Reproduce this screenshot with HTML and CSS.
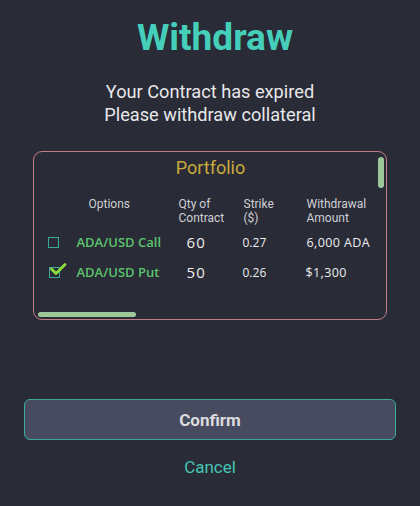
FILE: index.html
```html
<!DOCTYPE html>
<html>
<head>
<meta charset="utf-8">
<link rel="stylesheet" href="styles.css">
</head>
<body>
<main class="dialog">
  <h1 class="title">Withdraw</h1>
  <p class="subtitle">Your Contract has expired<br>Please withdraw collateral</p>
  <section class="card">
    <h2 class="card-title">Portfolio</h2>
    <div class="table">
      <div class="th"></div>
      <div class="th th-options">Options</div>
      <div class="th">Qty of<br>Contract</div>
      <div class="th">Strike<br>($)</div>
      <div class="th">Withdrawal<br>Amount</div>

      <div class="cell"><span class="check"></span></div>
      <div class="cell option">ADA/USD Call</div>
      <div class="cell qty">60</div>
      <div class="cell strike">0.27</div>
      <div class="cell amount">6,000 ADA</div>

      <div class="cell"><span class="check checked"><svg viewBox="0 0 18 14" width="18" height="14"><path d="M2.5 7 L7 11.5 L16 2.5" fill="none" stroke="#8ee03c" stroke-width="2.8" stroke-linecap="round" stroke-linejoin="round"/></svg></span></div>
      <div class="cell option">ADA/USD Put</div>
      <div class="cell qty">50</div>
      <div class="cell strike">0.26</div>
      <div class="cell amount amount2">$1,300</div>
    </div>
    <div class="vscroll"></div>
    <div class="hscroll"></div>
  </section>
  <div class="actions">
    <button class="confirm">Confirm</button>
    <button class="cancel">Cancel</button>
  </div>
</main>
</body>
</html>
```
FILE: styles.css
```css
html, body {
  margin: 0;
  padding: 0;
  background: #292b37;
}
body {
  width: 420px;
  height: 506px;
  font-family: Roboto, "Noto Sans", sans-serif;
  color: #e6e6e8;
}
.dialog {
  display: flex;
  flex-direction: column;
  align-items: center;
  padding-top: 18px;
}
.title {
  margin: 0;
  padding-left: 10px;
  font-size: 37px;
  line-height: 40px;
  font-weight: 700;
  color: #45cfbb;
}
.subtitle {
  margin: 22px 0 0;
  font-size: 18.2px;
  line-height: 23px;
  text-align: center;
  color: #e8e8ea;
}
.card {
  position: relative;
  box-sizing: border-box;
  width: 354px;
  height: 169px;
  margin-top: 25px;
  margin-right: 1px;
  border: 1.5px solid #c27d88;
  border-radius: 9px;
  padding: 4px 0 0 14px;
}
.card-title {
  margin: 0;
  text-align: center;
  font-size: 18px;
  line-height: 24px;
  font-weight: 400;
  color: #c9aa3c;
  padding-right: 12px;
}
.table {
  display: grid;
  grid-template-columns: 29px 102px 65px 63px 1fr;
  grid-template-rows: 30px 30px 30px;
  margin-top: 17px;
  align-items: center;
}
.th {
  font-size: 12px;
  line-height: 14px;
  color: #cfd0d4;
  align-self: start;
}
.th-options {
  padding-left: 12px;
}
.cell {
  font-family: "Open Sans", Roboto, sans-serif;
  font-size: 12px;
  color: #eeeeee;
  display: flex;
  align-items: center;
}
.option {
  color: #5cc46c;
  font-size: 13px;
  font-weight: 600;
}
.qty {
  font-size: 15px;
  font-weight: 500;
  letter-spacing: 1.2px;
  padding-left: 8px;
}
.strike {
  margin-left: -1px;
}
.amount {
  font-size: 12.5px;
  letter-spacing: 0.4px;
}
.amount2 {
  margin-left: -1px;
}
.check {
  position: relative;
  display: block;
  width: 9px;
  height: 9px;
  border: 1.5px solid #3aa99a;
  margin-left: 0;
}
.check.checked {
  margin-left: 1px;
}
.check svg {
  position: absolute;
  left: -1px;
  top: -6px;
}
.vscroll {
  position: absolute;
  right: 2px;
  top: 5px;
  width: 6px;
  height: 31px;
  border-radius: 3px;
  background: #9cc89a;
}
.hscroll {
  position: absolute;
  left: 4px;
  bottom: 2px;
  width: 98px;
  height: 5px;
  border-radius: 3px;
  background: #9cc89a;
}
.actions {
  display: flex;
  flex-direction: column;
  align-items: center;
  margin-top: 79px;
}
.confirm {
  box-sizing: border-box;
  width: 372px;
  height: 41px;
  background: #474b5f;
  border: 1.5px solid #3aaa9c;
  border-radius: 6px;
  font-family: Roboto, sans-serif;
  font-weight: 700;
  font-size: 17px;
  color: #dcdcdf;
}
.cancel {
  margin-top: 17px;
  background: none;
  border: none;
  font-family: Roboto, sans-serif;
  font-size: 17px;
  color: #45c6b2;
  padding: 0;
}
```
